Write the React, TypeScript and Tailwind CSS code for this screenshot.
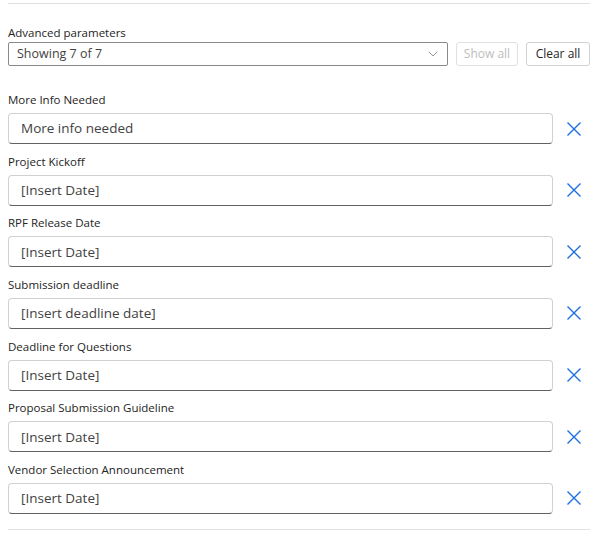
import { ChevronDown } from 'lucide-react';

const fields = [
  { label: 'More Info Needed', value: 'More info needed' },
  { label: 'Project Kickoff', value: '[Insert Date]' },
  { label: 'RPF Release Date', value: '[Insert Date]' },
  { label: 'Submission deadline', value: '[Insert deadline date]' },
  { label: 'Deadline for Questions', value: '[Insert Date]' },
  { label: 'Proposal Submission Guideline', value: '[Insert Date]' },
  { label: 'Vendor Selection Announcement', value: '[Insert Date]' },
];

function RemoveIcon() {
  return (
    <svg width="14" height="14" viewBox="0 0 14 14" fill="none" stroke="#1a6fe0" strokeWidth="1.4">
      <path d="M0.5 0.5L13.5 13.5M13.5 0.5L0.5 13.5" />
    </svg>
  );
}

export default function App() {
  return (
    <div className="h-[534px] w-[602px] bg-white pl-2 pr-3 pt-[3px] font-['Open_Sans',sans-serif] text-[#242424]">
      <div className="border-t border-[#e0e0e0]" />

      <div className="mt-[21px]">
        <p className="text-[11.5px] leading-4">Advanced parameters</p>
        <div className="mt-[1px] flex items-center gap-2">
          <div className="flex h-6 flex-1 items-center justify-between rounded-[2px] border border-[#8a8a8a] pl-2 pr-1.5 text-[12.5px] text-[#424242]">
            <span>Showing 7 of 7</span>
            <ChevronDown size={16} strokeWidth={1} className="text-[#616161]" />
          </div>
          <button className="h-6 w-[62px] rounded-[3px] border border-[#e0e0e0] text-[12px] text-[#bdbdbd]">
            Show all
          </button>
          <button className="h-6 w-[64px] rounded-[3px] border border-[#d1d1d1] text-[12px] text-[#242424]">
            Clear all
          </button>
        </div>
      </div>

      <div className="mt-[26px] flex flex-col gap-[9.67px]">
        {fields.map((f) => (
          <div key={f.label}>
            <p className="text-[11.5px] leading-[15px]">{f.label}</p>
            <div className="mt-[6px] flex items-center">
              <div className="flex h-[31px] flex-1 items-center rounded-[4px] border border-[#d1d1d1] border-b-[#616161] pl-3 text-[13.5px] text-[#424242]">
                {f.value}
              </div>
              <div className="flex w-[37px] justify-center pl-[5px]">
                <RemoveIcon />
              </div>
            </div>
          </div>
        ))}
      </div>

      <div className="mt-[15px] border-t border-[#e0e0e0]" />
    </div>
  );
}
